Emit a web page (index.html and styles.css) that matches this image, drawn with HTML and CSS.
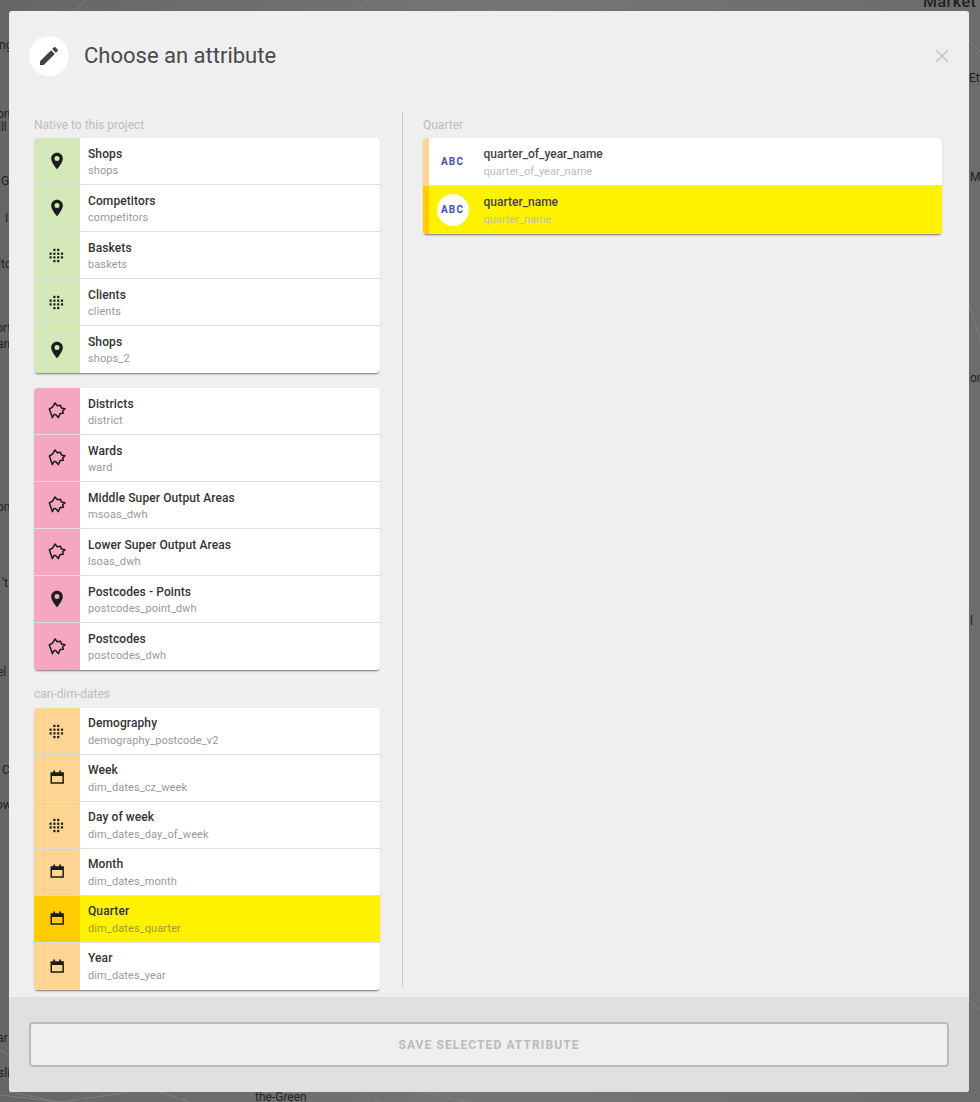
FILE: index.html
```html
<!DOCTYPE html>
<html lang="en">
<head>
  <meta charset="UTF-8" />
  <meta name="viewport" content="width=device-width, initial-scale=1.0" />
  <title>Choose an attribute</title>
  <link rel="stylesheet" href="styles.css">
</head>
<body>
  <svg width="0" height="0" class="defs">
    <symbol id="i-pin" viewBox="0 0 24 24">
      <path fill-rule="evenodd" d="M12 2C8.13 2 5 5.13 5 9c0 5.25 7 13 7 13s7-7.75 7-13c0-3.87-3.13-7-7-7zm0 10a3 3 0 1 1 0-6 3 3 0 0 1 0 6z"/>
    </symbol>
    <symbol id="i-grid" viewBox="0 0 20 20">
      <rect x="6.3" y="3.8" width="2.2" height="2.2"/><rect x="10.1" y="3.8" width="2.2" height="2.2"/>
      <rect x="2.5" y="7.6" width="2.2" height="2.2"/><rect x="6.3" y="7.6" width="2.2" height="2.2"/><rect x="10.1" y="7.6" width="2.2" height="2.2"/><rect x="13.9" y="7.6" width="2.2" height="2.2"/>
      <rect x="2.5" y="11.3" width="2.2" height="2.2"/><rect x="6.3" y="11.3" width="2.2" height="2.2"/><rect x="10.1" y="11.3" width="2.2" height="2.2"/><rect x="13.9" y="11.3" width="2.2" height="2.2"/>
      <rect x="6.3" y="15" width="2.2" height="2.2"/><rect x="10.1" y="15" width="2.2" height="2.2"/>
    </symbol>
    <symbol id="i-area" viewBox="0 0 20 20">
      <path fill="none" stroke="currentColor" stroke-width="1.5" stroke-linejoin="round" d="M8 2 10.3 4.8 13.5 4.2 14.4 7 18 7.8 15.6 10 16.3 12.2 13.2 12.4 11.3 16.6 8.6 13.4 7 13.6 5.3 16.6 3.8 12 2.3 8 5.5 6.2z"/>
    </symbol>
    <symbol id="i-cal" viewBox="0 0 20 20">
      <path fill-rule="evenodd" d="M6.3 2.4h1.8v1.8h4.2V2.4h1.8v1.8h2.8v11.5H3.5V4.2h2.8zM5 8v6.2h10.4V8z"/>
    </symbol>
  </svg>

  <!-- map behind the dialog -->
  <div class="map">
    <svg class="map-roads" viewBox="0 0 980 1102">
      <path d="M75 11 86 0M355 11 368 0M0 1050 40 1075 9 1090M0 1095 60 1102M10 1092 60 1102 130 1092M160 1092 190 1102M968 40 980 52M968 300 980 340M969 1000 980 1010M355 1092 380 1102M420 1092 470 1102"/>
    </svg>
    <span class="map-label map-market">Market</span>
    <span class="map-label" style="left:-1px;top:38px">ng</span>
    <span class="map-label" style="left:-3px;top:107px">on</span>
    <span class="map-label" style="left:-2px;top:120px">ill</span>
    <span class="map-label" style="left:1px;top:174px">G</span>
    <span class="map-label" style="left:5px;top:211px">I</span>
    <span class="map-label" style="left:-2px;top:257px">lto</span>
    <span class="map-label" style="left:-4px;top:321px">ort</span>
    <span class="map-label" style="left:-3px;top:337px">an</span>
    <span class="map-label" style="left:-3px;top:500px">on</span>
    <span class="map-label" style="left:2px;top:576px">'t</span>
    <span class="map-label" style="left:-3px;top:665px">el</span>
    <span class="map-label" style="left:2px;top:763px">C</span>
    <span class="map-label" style="left:-4px;top:798px">ow</span>
    <span class="map-label" style="left:-3px;top:1031px">ar</span>
    <span class="map-label" style="left:-2px;top:1066px">sli</span>
    <span class="map-label" style="left:969px;top:71px">Ett</span>
    <span class="map-label" style="left:970px;top:170px">M</span>
    <span class="map-label" style="left:970px;top:371px">on</span>
    <span class="map-label" style="left:970px;top:614px">l</span>
    <span class="map-label" style="left:255px;top:1090px">the-Green</span>
  </div>

  <div class="modal">
    <div class="modal-header">
      <div class="avatar">
        <svg class="icon-edit" viewBox="0 0 24 24"><path d="M3 17.25V21h3.75L17.81 9.94l-3.75-3.75L3 17.25zM20.71 7.04a1 1 0 0 0 0-1.41l-2.34-2.34a1 1 0 0 0-1.41 0l-1.83 1.83 3.75 3.75 1.83-1.83z"/></svg>
      </div>
      <h2>Choose an attribute</h2>
      <svg class="icon-close" viewBox="0 0 14 14"><path d="M1 1l12 12M13 1 1 13"/></svg>
    </div>

    <div class="modal-body">
      <div class="col-left">
        <p class="group-label">Native to this project</p>
        <div class="card card-green">
          <div class="row"><div class="row-icon"><svg><use href="#i-pin"/></svg></div><div class="row-text"><strong>Shops</strong><span>shops</span></div></div>
          <div class="row"><div class="row-icon"><svg><use href="#i-pin"/></svg></div><div class="row-text"><strong>Competitors</strong><span>competitors</span></div></div>
          <div class="row"><div class="row-icon"><svg><use href="#i-grid"/></svg></div><div class="row-text"><strong>Baskets</strong><span>baskets</span></div></div>
          <div class="row"><div class="row-icon"><svg><use href="#i-grid"/></svg></div><div class="row-text"><strong>Clients</strong><span>clients</span></div></div>
          <div class="row"><div class="row-icon"><svg><use href="#i-pin"/></svg></div><div class="row-text"><strong>Shops</strong><span>shops_2</span></div></div>
        </div>

        <div class="card card-pink">
          <div class="row"><div class="row-icon"><svg><use href="#i-area"/></svg></div><div class="row-text"><strong>Districts</strong><span>district</span></div></div>
          <div class="row"><div class="row-icon"><svg><use href="#i-area"/></svg></div><div class="row-text"><strong>Wards</strong><span>ward</span></div></div>
          <div class="row"><div class="row-icon"><svg><use href="#i-area"/></svg></div><div class="row-text"><strong>Middle Super Output Areas</strong><span>msoas_dwh</span></div></div>
          <div class="row"><div class="row-icon"><svg><use href="#i-area"/></svg></div><div class="row-text"><strong>Lower Super Output Areas</strong><span>lsoas_dwh</span></div></div>
          <div class="row"><div class="row-icon"><svg><use href="#i-pin"/></svg></div><div class="row-text"><strong>Postcodes - Points</strong><span>postcodes_point_dwh</span></div></div>
          <div class="row"><div class="row-icon"><svg><use href="#i-area"/></svg></div><div class="row-text"><strong>Postcodes</strong><span>postcodes_dwh</span></div></div>
        </div>

        <p class="group-label group-label-next">can-dim-dates</p>
        <div class="card card-orange">
          <div class="row"><div class="row-icon"><svg><use href="#i-grid"/></svg></div><div class="row-text"><strong>Demography</strong><span>demography_postcode_v2</span></div></div>
          <div class="row"><div class="row-icon"><svg><use href="#i-cal"/></svg></div><div class="row-text"><strong>Week</strong><span>dim_dates_cz_week</span></div></div>
          <div class="row"><div class="row-icon"><svg><use href="#i-grid"/></svg></div><div class="row-text"><strong>Day of week</strong><span>dim_dates_day_of_week</span></div></div>
          <div class="row"><div class="row-icon"><svg><use href="#i-cal"/></svg></div><div class="row-text"><strong>Month</strong><span>dim_dates_month</span></div></div>
          <div class="row selected"><div class="row-icon"><svg><use href="#i-cal"/></svg></div><div class="row-text"><strong>Quarter</strong><span>dim_dates_quarter</span></div></div>
          <div class="row"><div class="row-icon"><svg><use href="#i-cal"/></svg></div><div class="row-text"><strong>Year</strong><span>dim_dates_year</span></div></div>
        </div>
      </div>

      <div class="col-right">
        <p class="group-label">Quarter</p>
        <div class="card card-attrs">
          <div class="attr"><div class="attr-badge">ABC</div><div class="row-text"><strong>quarter_of_year_name</strong><span>quarter_of_year_name</span></div></div>
          <div class="attr selected"><div class="attr-badge">ABC</div><div class="row-text"><strong>quarter_name</strong><span>quarter_name</span></div></div>
        </div>
      </div>
    </div>

    <div class="modal-footer">
      <button class="save-btn" disabled>SAVE SELECTED ATTRIBUTE</button>
    </div>
  </div>
</body>
</html>
```

FILE: styles.css
```css
* {
  box-sizing: border-box;
}

html, body {
  margin: 0;
  height: 100%;
}

body {
  background: linear-gradient(90deg, #666 0%, #757575 50%, #6c6c6c 100%);
  font-family: Roboto, "Liberation Sans", sans-serif;
  overflow: hidden;
}

.defs {
  position: absolute;
}

.map-roads {
  position: absolute;
  left: 0;
  top: 0;
  width: 980px;
  height: 1102px;
  fill: none;
  stroke: #7e7e7e;
  stroke-width: 1;
}

.map-label {
  position: absolute;
  font-size: 12px;
  line-height: 14px;
  color: #222;
  white-space: nowrap;
}

.map-market {
  left: 923px;
  top: -7px;
  font-size: 16px;
  line-height: 18px;
  font-weight: 500;
  letter-spacing: 0.5px;
}

.modal {
  position: relative;
  margin: 11px 0 0 9px;
  width: 960px;
  height: 1081px;
  background-color: #efefef;
  border-radius: 3px;
  overflow: hidden;
}

.modal-header {
  height: 100px;
  padding: 25px 20px 0;
  display: flex;
  align-items: flex-start;
}

.avatar {
  width: 40px;
  height: 40px;
  border-radius: 50%;
  background-color: #fff;
  display: flex;
  align-items: center;
  justify-content: center;
  flex: none;
}

.icon-edit {
  width: 24px;
  height: 24px;
  fill: #444;
}

.modal-header h2 {
  margin: 0 0 0 15px;
  font-size: 22px;
  line-height: 40px;
  font-weight: 400;
  color: #4a4a4a;
  flex: 1;
}

.icon-close {
  width: 14px;
  height: 14px;
  margin-top: 13px;
  fill: none;
  stroke: #c6c6c6;
  stroke-width: 1.6;
}

.modal-body {
  height: 876px;
  display: flex;
  padding-left: 25px;
}

.col-left {
  width: 346px;
  margin-right: 22px;
  flex: none;
}

.col-right {
  width: 540px;
  border-left: 1px solid #ccc;
  padding-left: 20px;
  flex: none;
}

.group-label {
  margin: 0;
  padding-top: 7px;
  height: 27px;
  font-size: 12px;
  line-height: 14px;
  color: #bdbdbd;
}

.group-label-next {
  margin-top: 17px;
  height: 21px;
  padding-top: 0;
}

.card {
  background-color: #fff;
  border-radius: 4px;
  box-shadow: 0 2px 2px -1px rgba(0, 0, 0, 0.5), 0 0 1px rgba(0, 0, 0, 0.15);
  overflow: hidden;
  margin-bottom: 15px;
}

.row {
  display: flex;
  height: 47px;
  border-bottom: 1px solid #ddd;
}

.row:last-child {
  border-bottom: none;
}

.row-icon {
  width: 46px;
  flex: none;
  display: flex;
  align-items: center;
  justify-content: center;
}

.row-icon svg {
  width: 20px;
  height: 20px;
  fill: #1c1c1c;
  color: #1c1c1c;
}

.card-green .row-icon { background-color: #d4e8b9; }
.card-pink .row-icon { background-color: #f5a6c1; }
.card-orange .row-icon { background-color: #ffd594; }

.row.selected {
  background-color: #fff200;
}

.card-orange .row.selected .row-icon {
  background-color: #ffcc00;
}

.row-text {
  display: flex;
  flex-direction: column;
  padding: 9px 0 0 8px;
  min-width: 0;
}

.row-text strong {
  font-size: 12px;
  line-height: 15px;
  font-weight: 500;
  letter-spacing: 0.1px;
  color: #333;
}

.row-text span {
  margin-top: 2px;
  font-size: 11px;
  line-height: 14px;
  letter-spacing: 0.1px;
  color: #999;
}

.card-orange .row-text {
  padding-top: 8px;
}

.card-orange .row-text span {
  margin-top: 3px;
}

.row.selected .row-text span {
  color: #a09a2c;
}

.card-attrs {
  width: 519px;
}

.attr {
  display: flex;
  align-items: flex-start;
  height: 48px;
  border-left: 6px solid #ffd594;
  border-bottom: 1px solid #ddd;
}

.attr:last-child {
  border-bottom: none;
}

.attr.selected {
  background-color: #fff200;
  border-left-color: #ffcc00;
}

.attr-badge {
  width: 32px;
  height: 32px;
  margin: 7px 0 0 8px;
  padding-right: 1px;
  border-radius: 50%;
  flex: none;
  display: flex;
  align-items: center;
  justify-content: center;
  font-size: 10px;
  font-weight: 700;
  letter-spacing: 1.2px;
  color: #3f51b5;
}

.attr.selected .attr-badge {
  margin-top: 8px;
  padding-bottom: 1px;
  background-color: #fff;
}

.attr .row-text {
  padding-left: 14.5px;
}

.attr .row-text strong {
  letter-spacing: 0;
  color: #444;
}

.attr .row-text span {
  margin-top: 3px;
  letter-spacing: 0;
  color: #bdbdbd;
}

.modal-footer {
  margin-top: 10px;
  height: 95px;
  padding: 25px 20px;
  background-color: #e0e0e0;
}

.save-btn {
  width: 920px;
  height: 45px;
  background-color: #efefef;
  border: 2px solid #bbb;
  border-radius: 4px;
  font-family: inherit;
  font-size: 12px;
  font-weight: 700;
  letter-spacing: 1.1px;
  color: #bbb;
}
```
